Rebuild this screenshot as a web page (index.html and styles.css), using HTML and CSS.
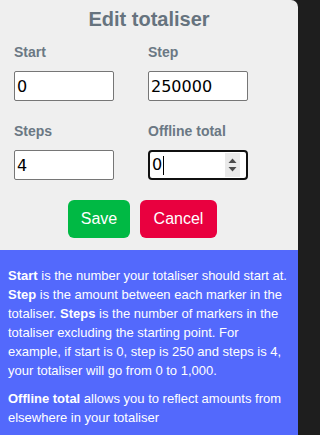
FILE: index.html
```html
<!DOCTYPE html>
<html lang="en">
<head>
<meta charset="utf-8">
<title>Edit totaliser</title>
<link rel="stylesheet" href="styles.css">
</head>
<body>
<div class="panel">
  <h1 class="title">Edit totaliser</h1>
  <form class="form">
    <div class="grid">
      <div class="cell">
        <label class="label" for="start">Start</label>
        <input class="input" id="start" type="text" value="0">
      </div>
      <div class="cell">
        <label class="label" for="step">Step</label>
        <input class="input" id="step" type="text" value="250000">
      </div>
      <div class="cell">
        <label class="label" for="steps">Steps</label>
        <input class="input" id="steps" type="text" value="4">
      </div>
      <div class="cell">
        <label class="label" for="offline">Offline total</label>
        <div class="numfield">
          <span class="numvalue" id="offline">0</span><span class="caret"></span>
          <span class="spinner">
            <svg width="15" height="24" viewBox="0 0 15 24">
              <rect width="15" height="24" fill="#e9e9e9"/>
              <path d="M3.5 10 L7.5 5.5 L11.5 10 Z" fill="#4a4a4a"/>
              <path d="M3.5 14 L7.5 18.5 L11.5 14 Z" fill="#4a4a4a"/>
            </svg>
          </span>
        </div>
      </div>
    </div>
    <div class="actions">
      <button class="btn btn-save" type="button">Save</button>
      <button class="btn btn-cancel" type="button">Cancel</button>
    </div>
  </form>
  <div class="help">
    <p class="help-p"><b>Start</b> is the number your totaliser should start at. <b>Step</b> is the amount between each marker in the totaliser. <b>Steps</b> is the number of markers in the totaliser excluding the starting point. For example, if start is 0, step is 250 and steps is 4, your totaliser will go from 0 to 1,000.</p>
    <p class="help-p"><b>Offline total</b> allows you to reflect amounts from elsewhere in your totaliser</p>
  </div>
</div>
</body>
</html>
```

FILE: styles.css
```css
html, body {
  margin: 0;
  padding: 0;
  background: #1e1e1e;
}
body {
  font-family: "Liberation Sans", Arial, sans-serif;
}
.panel {
  width: 298px;
  background: #efefef;
  border-top-right-radius: 7px;
  min-height: 435px;
  display: flex;
  flex-direction: column;
  overflow: hidden;
}
.title {
  margin: 7px 0 0;
  font-size: 20px;
  line-height: 24px;
  font-weight: bold;
  color: #66737e;
  text-align: center;
}
.form {
  padding: 13px 14px 0;
}
.grid {
  display: grid;
  grid-template-columns: 134px 134px;
  row-gap: 22px;
}
.cell {
  display: flex;
  flex-direction: column;
  align-items: flex-start;
}
.label {
  font-size: 14px;
  line-height: 16px;
  font-weight: bold;
  color: #6b7884;
  margin-bottom: 11px;
}
.input {
  box-sizing: border-box;
  width: 100px;
  height: 30px;
  margin: 0;
  border: 1px solid #767676;
  border-radius: 2px;
  padding: 0 2px;
  background: #fff;
  font-family: "DejaVu Sans", sans-serif;
  font-size: 16px;
  color: #000;
}
.numfield {
  box-sizing: border-box;
  width: 100px;
  height: 30px;
  border: 2px solid #101010;
  border-radius: 4px;
  background: #fff;
  display: flex;
  align-items: center;
  padding: 0 6px 0 2px;
  font-family: "DejaVu Sans", sans-serif;
  font-size: 16px;
  color: #000;
}
.numvalue {
  line-height: 20px;
}
.caret {
  width: 1px;
  height: 19px;
  background: #000;
  margin-left: 1px;
}
.spinner {
  margin-left: auto;
  display: flex;
}
.actions {
  display: flex;
  gap: 10px;
  padding: 20px 0 0 54px;
}
.btn {
  height: 38px;
  border: none;
  border-radius: 6px;
  padding: 0;
  font-family: "Liberation Sans", Arial, sans-serif;
  font-size: 16px;
  color: #fff;
}
.btn-save {
  background: #00b944;
  width: 62px;
}
.btn-cancel {
  background: #e9003f;
  width: 77px;
}
.help {
  margin-top: 12px;
  flex: 1;
  background: #5369fc;
  color: #fff;
  padding: 16px 8px 8px;
  font-size: 13px;
  line-height: 19px;
}
.help-p {
  margin: 0 0 9px;
}
```
